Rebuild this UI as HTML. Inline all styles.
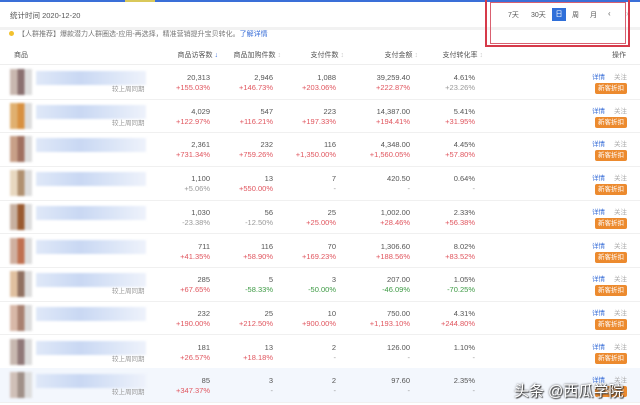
<!DOCTYPE html>
<html><head><meta charset="utf-8"><style>
*{margin:0;padding:0;box-sizing:border-box}
body{width:640px;height:405px;overflow:hidden;background:#fff;font-family:"Liberation Sans","Noto Sans CJK SC",sans-serif;position:relative;font-size:7.5px;color:#555}
.a{position:absolute;white-space:nowrap}
.r{text-align:right}
.red{color:#e0555e}.grn{color:#3d9a44}.gry{color:#999}
.img{position:absolute;width:22px;height:26px;filter:blur(1px)}
.bar{position:absolute;height:14px;background:linear-gradient(90deg,#dfe8f8,#c9d8f3 40%,#dbe5f7 70%,#eef2fb);filter:blur(1px)}
.btn{position:absolute;width:32px;height:11px;background:#ec8a2e;border-radius:2px;color:#fff;font-size:6.5px;text-align:center;line-height:11px}
</style></head><body>
<div class="a" style="left:0;top:0;width:640px;height:2px;background:#3a6fd8"></div>
<div class="a" style="left:125px;top:0;width:30px;height:2px;background:#d9c85a"></div>
<div class="a" style="left:10px;top:10px;font-size:7.5px;color:#555">统计时间 2020-12-20</div>
<div class="a" style="left:0;top:27px;width:640px;height:3px;background:#f2f2f2"></div>
<div class="a" style="left:9px;top:31px;width:5px;height:5px;border-radius:50%;background:#f2c12e"></div>
<div class="a" style="left:18px;top:29px;font-size:7px;color:#777">【人群推荐】爆款潜力人群圈选-应用-再选择，精准营销提升宝贝转化。<span style="color:#3a6fd8">了解详情</span></div>
<div class="a" style="left:508px;top:10px;font-size:7px;color:#555">7天</div>
<div class="a" style="left:531px;top:10px;font-size:7px;color:#555">30天</div>
<div class="a" style="left:552px;top:8px;width:14px;height:13px;background:#2f6fd9;color:#fff;font-size:7px;text-align:center;line-height:13px">日</div>
<div class="a" style="left:572px;top:10px;font-size:7px;color:#555">周</div>
<div class="a" style="left:590px;top:10px;font-size:7px;color:#555">月</div>
<div class="a" style="left:608px;top:9px;font-size:8px;color:#666">‹</div>
<div class="a" style="left:626px;top:9px;font-size:8px;color:#bbb">›</div>
<div class="a" style="left:485px;top:-2px;width:145px;height:49px;border:2px solid #d63a4a"></div>
<div class="a" style="left:490px;top:2px;width:136px;height:42px;border:1.5px solid #d96070"></div>
<div class="a" style="left:14px;top:50px;font-size:7px">商品</div>
<div class="a r" style="right:422px;top:50px;font-size:7px">商品访客数 <span style="color:#3a6fd8">↓</span></div>
<div class="a r" style="right:359px;top:50px;font-size:7px">商品加购件数 <span style="color:#ccc">↕</span></div>
<div class="a r" style="right:296px;top:50px;font-size:7px">支付件数 <span style="color:#ccc">↕</span></div>
<div class="a r" style="right:222px;top:50px;font-size:7px">支付金额 <span style="color:#ccc">↕</span></div>
<div class="a r" style="right:157px;top:50px;font-size:7px">支付转化率 <span style="color:#ccc">↕</span></div>
<div class="a" style="left:612px;top:50px;font-size:7px">操作</div>
<div class="a" style="left:0;top:64px;width:640px;height:1px;background:#eee"></div>
<div id="rows"></div>
<div class="a" style="left:514px;top:380px;font-size:15px;color:#fff;text-shadow:0 0 2px #333,1px 1px 1px #333">头条 @西瓜学院</div>
<script>
var d=[
["20,313","+155.03%","2,946","+146.73%","1,088","+203.06%","39,259.40","+222.87%","4.61%","+23.26%"],
["4,029","+122.97%","547","+116.21%","223","+197.33%","14,387.00","+194.41%","5.41%","+31.95%"],
["2,361","+731.34%","232","+759.26%","116","+1,350.00%","4,348.00","+1,560.05%","4.45%","+57.80%"],
["1,100","+5.06%","13","+550.00%","7","-","420.50","-","0.64%","-"],
["1,030","-23.38%","56","-12.50%","25","+25.00%","1,002.00","+28.46%","2.33%","+56.38%"],
["711","+41.35%","116","+58.90%","70","+169.23%","1,306.60","+188.56%","8.02%","+83.52%"],
["285","+67.65%","5","-58.33%","3","-50.00%","207.00","-46.09%","1.05%","-70.25%"],
["232","+190.00%","25","+212.50%","10","+900.00%","750.00","+1,193.10%","4.31%","+244.80%"],
["181","+26.57%","13","+18.18%","2","-","126.00","-","1.10%","-"],
["85","+347.37%","3","-","2","-","97.60","-","2.35%","-"]];
var rights=[430,367,304,230,165];
var cols=[["#c9b8b0","#8a7070"],["#e0b070","#d89040"],["#c8a088","#a07060"],["#e8d8c0","#b09070"],["#c8b0a0","#9a5a30"],["#d0b0a0","#c07050"],["#e0c0a0","#907060"],["#d8b8a8","#a88070"],["#c8b8b0","#907878"],["#d0c0b8","#a09088"]];
var h="";
for(var i=0;i<10;i++){
 var t=65+i*33.7;
 if(i==9)h+='<div class="a" style="left:0;top:'+t+'px;width:640px;height:34px;background:#f3f7fd"></div>';
 h+='<div class="img" style="left:10px;top:'+(t+4)+'px;background:linear-gradient(90deg,'+cols[i][0]+' 0 33%,'+cols[i][1]+' 33% 66%,#ddd 66%)"></div>';
 h+='<div class="bar" style="left:36px;top:'+(t+6)+'px;width:110px"></div>';
 if(i==0||i==1||i==6||i==8||i==9)h+='<div class="a" style="left:112px;top:'+(t+18)+'px;font-size:6.5px;color:#999">较上周同期</div>';
 for(var c=0;c<5;c++){
  var v=d[i][c*2],p=d[i][c*2+1];
  var cl=p=="-"?"gry":(p[0]=="+"?"red":(i==6?"grn":"gry"));
  if(c==4&&i==0)cl="gry";if(i==3&&c==0)cl="gry";
  h+='<div class="a r" style="right:'+rights[c]+'px;top:'+(t+8)+'px;color:#555">'+v+'</div>';
  h+='<div class="a r '+cl+'" style="right:'+rights[c]+'px;top:'+(t+18)+'px">'+p+'</div>';
 }
 h+='<div class="a" style="left:592px;top:'+(t+6)+'px;font-size:6.5px;color:#3a6fd8">详情</div>';
 h+='<div class="a" style="left:614px;top:'+(t+6)+'px;font-size:6.5px;color:#aaa">关注</div>';
 h+='<div class="btn" style="left:595px;top:'+(t+18)+'px">新客折扣</div>';
 h+='<div class="a" style="left:0;top:'+(t+33.5)+'px;width:640px;height:1px;background:#f0f0f0"></div>';
}
document.getElementById("rows").innerHTML=h;
</script>
</body></html>
